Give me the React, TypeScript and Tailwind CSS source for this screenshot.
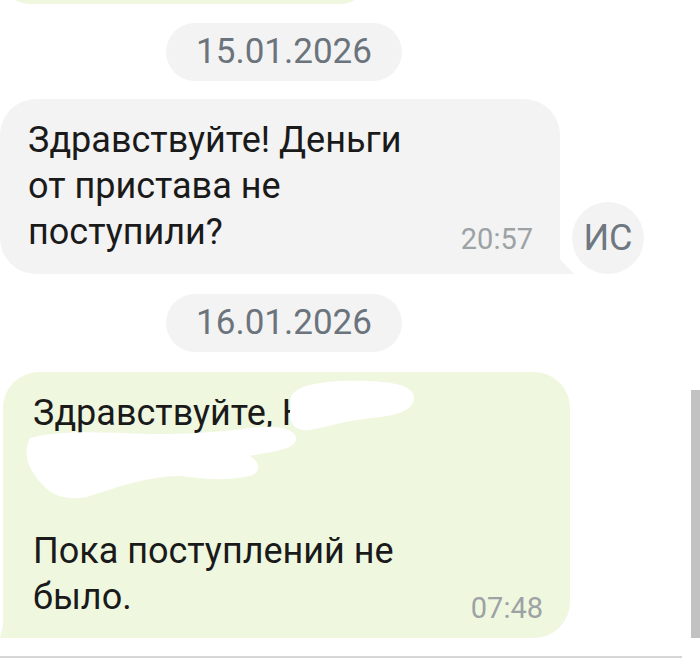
import React from 'react'

const font = { fontFamily: 'Roboto, "Noto Sans", sans-serif' }

function DatePill({ date, className = '' }: { date: string; className?: string }) {
  return (
    <div
      className={`ml-[166px] flex h-[58px] w-[236px] items-center justify-center rounded-full bg-[#f3f3f3] text-[35px] text-[#6b747c] ${className}`}
    >
      {date}
    </div>
  )
}

export default function App() {
  return (
    <div className="relative h-[664px] w-[700px] overflow-hidden bg-white" style={font}>
      {/* tail end of the previous message */}
      <div className="mt-[-36px] h-[40px] w-[370px] rounded-b-[30px] bg-[#eff7df]" />

      <DatePill date="15.01.2026" className="mt-[19px]" />

      {/* incoming message + avatar */}
      <div className="mt-[18px] flex items-end">
        <div className="relative w-[560px] rounded-[36px] rounded-br-none bg-[#f3f3f3] pt-[18px] pb-[19px] pl-[28px] pr-[27px]">
          <div className="flex items-end justify-between">
            <p className="text-[36px] leading-[46px] text-[#1a1a1a]">
              Здравствуйте! Деньги
              <br />
              от пристава не
              <br />
              поступили?
            </p>
            <span className="mb-[-2px] text-[29px] leading-[36px] text-[#9da2a5]">20:57</span>
          </div>
          <svg className="absolute bottom-0 right-[-14px]" width="15" height="16" viewBox="0 0 15 16">
            <path d="M0 0 L15 16 L0 16 Z" fill="#f3f3f3" />
          </svg>
        </div>
        <div className="ml-[12px] flex h-[72px] w-[72px] items-center justify-center rounded-full bg-[#f3f3f3] text-[36px] text-[#6f7880]">
          ИС
        </div>
      </div>

      <DatePill date="16.01.2026" className="mt-[20px]" />

      {/* reply */}
      <div className="relative ml-[3px] mt-[20px] w-[567px] rounded-[36px] rounded-bl-none bg-[#eff7df] pt-[18px] pb-[18px] pl-[30px] pr-[27px]">
        <div className="flex items-end justify-between">
          <p className="text-[36px] leading-[46px] text-[#1a1a1a]">
            Здравствуйте, Н
            <br />
            <span className="invisible">—</span>
            <br />
            <br />
            Пока поступлений не
            <br />
            было.
          </p>
          <span className="mb-[-6px] text-[29px] leading-[36px] text-[#9da2a5]">07:48</span>
        </div>
        <svg className="absolute bottom-0 left-[-3px]" width="6" height="12" viewBox="0 0 6 12">
          <path d="M3 0 L3 12 L0 12 Z" fill="#eff7df" />
        </svg>
        {/* redaction scribbles */}
        <svg className="pointer-events-none absolute left-[-3px] top-0" width="440" height="140" viewBox="0 0 440 140">
          <path
            d="M291 24 C300 10 336 8 368 9 C395 10 414 14 414 26 C414 40 392 44 372 46 C350 48 330 54 310 58 C294 60 289 50 290 40 Z"
            fill="#ffffff"
          />
          <path
            d="M30 66 C60 58 100 60 150 62 C190 62 220 60 250 56 C280 52 298 58 296 68 C294 78 270 80 250 84 C260 90 262 100 250 104 C220 110 200 106 180 104 C150 104 120 114 90 124 C70 130 52 124 42 112 C28 98 22 80 30 66 Z"
            fill="#ffffff"
          />
        </svg>
      </div>

      <div className="mt-[18px] h-[2px] w-[682px] bg-[#d6d6d6]" />

      {/* scrollbar */}
      <div className="absolute right-0 top-[390px] h-[248px] w-[9px] bg-[#c2c2c2]" />
    </div>
  )
}
